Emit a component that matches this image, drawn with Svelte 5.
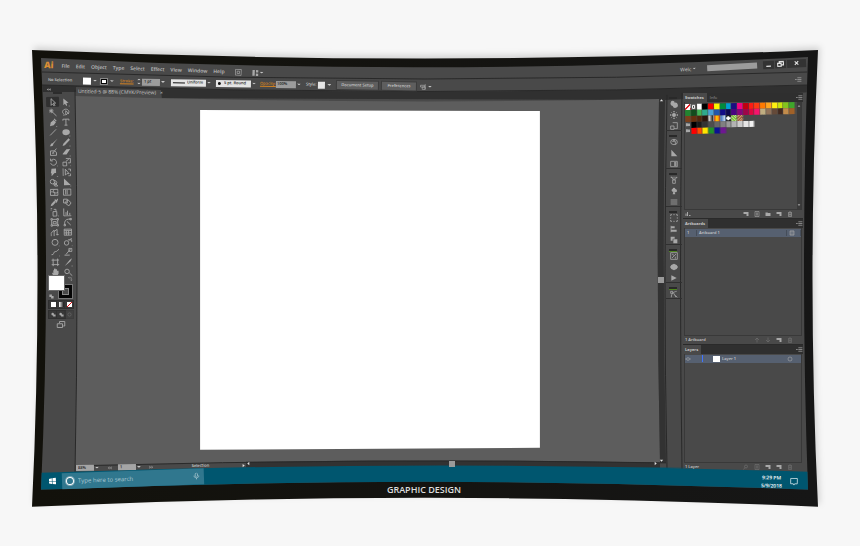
<script lang="ts">
  type Icon = { name: string; d: string; solid?: boolean };

  const menus = ['File', 'Edit', 'Object', 'Type', 'Select', 'Effect', 'View', 'Window', 'Help'];

  // all icons are drawn in a 12 x 12 box
  const tools: Icon[] = [
    { name: 'Selection', d: 'M4 1v9l2-2 2 3 1-1-2-3h3z' },
    { name: 'Direct selection', d: 'M3 1v9l2-2 2 3 1-1-1-3h3zM10 11h2v1h-2z', solid: true },
    { name: 'Magic wand', d: 'M5 5l6 6M4 1v6M1 4h6M2 2l4 4M6 2L2 6' },
    { name: 'Lasso', d: 'M3 8C0 5 3 2 6 2s6 3 3 6M6 4v6l2-2h2zM3 8c1 1 1 2 0 3' },
    { name: 'Pen', d: 'M2 11l1-5 4-3 3 3-3 4zM7 2l1-1 3 3-1 1zM10 11h2v1h-2z', solid: true },
    { name: 'Type', d: 'M2 4V2h8v2M6 2v8M4 10h4' },
    { name: 'Line segment', d: 'M2 10L10 2' },
    { name: 'Ellipse', d: 'M1 6a5 4 0 0 1 10 0a5 4 0 0 1-10 0zM10 11h2v1h-2z', solid: true },
    { name: 'Paintbrush', d: 'M12 1L6 8 5 7zM5 7c-3 0-2 3-4 4c3 0 5 0 5-3z', solid: true },
    { name: 'Pencil', d: 'M1 11l1-3 7-7 2 2-7 7zM10 11h2v1h-2z', solid: true },
    { name: 'Blob brush', d: 'M2 4h5l3 2v4H2zM5 7l5-6M4 7h3' },
    { name: 'Eraser', d: 'M1 8l5-6h5L6 9H1zM10 11h2v1h-2z', solid: true },
    { name: 'Rotate', d: 'M3 3a4 4 0 1 1-1 4M2 1v3h3M11 11h1' },
    { name: 'Scale', d: 'M1 6h5v5H1zM5 1h6v6H8M5 5l4-3M11 11h1' },
    { name: 'Width', d: 'M3 1h6v6H7l-4 4V7H2zM10 11h2v1h-2z', solid: true },
    { name: 'Free transform', d: 'M1 1v10M4 2v8l2-2h3zM8 2h3v3M11 8v3H8' },
    { name: 'Shape builder', d: 'M1 5a3 3 0 1 1 6 0a3 3 0 1 1-6 0M5 4a3 3 0 1 1 0 5M7 6v5h4z' },
    { name: 'Perspective grid', d: 'M2 1v9h9zM2 4h3M2 7h6M5 4v6M10 11h2v1h-2z', solid: true },
    { name: 'Mesh', d: 'M1 2h10v8H1zM1 6c3-3 6 3 10 0M6 2c-3 3 3 5 0 8' },
    { name: 'Gradient', d: 'M1 2h10v8H1zM6 3v6M4 3v6' },
    { name: 'Eyedropper', d: 'M1 11l1-3 4-4 2 2-4 4zM6 3l1-1 2 1 1-2 1 1-1 3-1 2z', solid: true },
    { name: 'Blend', d: 'M1 2h5v5H1zM4 5l3-2 4 4-3 4-4-3z' },
    { name: 'Symbol sprayer', d: 'M4 5h5v6H4zM5 2h3v3M1 1h2M1 3h1M11 11h1' },
    { name: 'Column graph', d: 'M1 1v10h10M4 10V6M6 10V4M9 10V7' },
    { name: 'Pattern', d: 'M1 1h2v2H1zM9 1h2v2H9zM1 9h2v2H1zM9 9h2v2H9zM3 2h6M3 10h6M2 3v6M10 3v6M4 5h4v3H4z' },
    { name: 'Reshape', d: 'M2 10V6c1-4 4-4 8-4M1 9h2v2H1zM9 1h2v2H9zM5 5l5 5' },
    { name: 'Graph curve', d: 'M1 11V7l4-4v8M5 5l4-3v8M8 9h3' },
    { name: 'Table', d: 'M1 2h10v8H1zM1 4h10M4 4v6M7 4v6M1 7h10' },
    { name: 'Warp', d: 'M2 6a4 4 0 1 1 8 0a4 4 0 1 1-8 0M11 11h1' },
    { name: 'Twirl', d: 'M1 7a3 3 0 1 1 6 0a3 3 0 1 1-6 0M6 3h5v3M8 3l3-2M11 11h1' },
    { name: 'Wrinkle', d: 'M1 9c4 1 2-4 5-4s2-1 5-3M11 11h1' },
    { name: 'Crystallize', d: 'M1 10h7M3 9l6-7M7 1h4v4H7z' },
    { name: 'Artboard', d: 'M3 1v10M9 1v10M1 3h10M1 9h10' },
    { name: 'Slice', d: 'M1 11L8 3l3-2-2 4-4 3zM10 11h2v1h-2z', solid: true },
    { name: 'Hand', d: 'M3 11L1 6l2 1V3h1V1h2v1h2v2h2v4l-2 3z', solid: true },
    { name: 'Zoom', d: 'M1 5a3 3 0 1 1 6 0a3 3 0 1 1-6 0M7 7l4 4' }
  ];

  const dock: { green?: boolean; icons: Icon[] }[] = [
    {
      icons: [
        { name: 'Color', d: 'M1 4a3 3 0 1 1 6 0a4 4 0 1 1-3 5a4 4 0 0 1-3-5z', solid: true },
        { name: 'Brightness', d: 'M3 6a3 3 0 1 1 6 0a3 3 0 1 1-6 0M5 0h2v2H5zM5 10h2v2H5zM0 5h2v2H0zM10 5h2v2h-2zM2 2h1v1H2zM9 2h1v1H9zM2 9h1v1H2zM9 9h1v1H9z', solid: true },
        { name: 'Links', d: 'M4 1h7v9H6M1 6h5v5H1z' }
      ]
    },
    {
      icons: [
        { name: 'Color guide', d: 'M1 6a5 4 0 1 1 10 0a5 4 0 1 1-10 0M4 6a2 2 0 1 1 4 0v4M6 2v4' },
        { name: 'Harmony', d: 'M2 1v10h9zM4 1l5 6', solid: true },
        { name: 'Gradient', d: 'M1 2h10v8H1zM8 3v6M9 3v6M7 3v6' }
      ]
    },
    {
      icons: [
        { name: 'Brushes', d: 'M4 6h4v5H4zM5 6L2 1M6 6V1M7 6l3-4M1 2h3M8 2h3' },
        { name: 'Symbols', d: 'M4 3a2 2 0 1 1 4 0a2 2 0 1 1 0 5l-1-1 1 4H4l1-4a2 2 0 1 1-1-4z', solid: true },
        { name: 'Stroke', d: 'M1 3h10M1 6h10M1 9h10' }
      ]
    },
    {
      icons: [
        { name: 'Transform', d: 'M1 1h2M5 1h2M9 1h2v2M11 5v2M11 9v2H9M7 11H5M3 11H1V9M1 7V5M1 3V1' },
        { name: 'Align', d: 'M1 1h1v10H1zM2 2h5v3H2zM2 7h8v3H2z', solid: true },
        { name: 'Pathfinder', d: 'M1 1h6v3H4v3H1zM5 5h6v6H5z', solid: true }
      ]
    },
    {
      green: true,
      icons: [
        { name: 'Appearance', d: 'M1 1h10v10H1zM3 9l6-6M3 3l3 2M8 7v3' },
        { name: 'Graphic styles', d: 'M6 1l4 2 2 3-2 3-4 2-4-2-2-3 2-3z', solid: true },
        { name: 'Actions', d: 'M2 2l8 4-8 4z', solid: true }
      ]
    },
    {
      green: true,
      icons: [{ name: 'Curves', d: 'M2 11c0-6 3-8 8-9M1 2h3v3H1zM8 8l3 3M5 4l4 7' }]
    }
  ];

  const swatches = [
    ['none', 'reg', '#fff', '#000', '#f50000', '#fff500', '#008c3c', '#00a0d2', '#1c0d82', '#f0047f', '#c00010', '#ff1c15', '#ff3a12', '#ff7a00', '#ffa51e', '#fff010', '#cbe50c', '#84c41d', '#3fa62b'],
    ['#238330', '#124c1d', '#42b455', '#2fa98c', '#4b9fd4', '#2456ac', '#110b86', '#0d0750', '#490281', '#85057a', '#9f0549', '#e0053f', '#f5146c', '#c0ad81', '#917259', '#654a39', '#43291e', '#c38c4b', '#a16128'],
    ['#7b401c', '#66300d', '#50260c', '#2b140c', 'fade', 'sunset', 'sky', 'dot', 'leaf', 'weave'],
    ['folder', '#000', '#1a1a1a', '#333', '#4d4d4d', '#666', '#808080', '#999', '#b3b3b3', '#ccc', '#e6e6e6', '#f2f2f2'],
    ['folder', '#ff0000', '#ff4b00', '#ffe600', '#20922b', '#0c1194', '#6e1791']
  ];

  const footIcons = {
    link: 'M1 10V5h2v5zM4 10V2h2v8zM8 8h3v2H8z',
    list: 'M2 1h8v10H2zM4 4h4M4 6h4M4 8h4',
    folder: 'M1 3h4l1 1h5v6H1z',
    page: 'M1 2h10v8H7V6H1z',
    trash: 'M2 3h8M5 1h2M3 4v7h6V4M5 5v4M7 5v4',
    up: 'M6 11V2M2 6l4-4 4 4',
    down: 'M6 1v9M2 6l4 4 4-4',
    search: 'M3 5a3 3 0 1 1 6 0a3 3 0 1 1-6 0M4 7l-3 4'
  };

  const isPlain = (c: string) => c.startsWith('#');

  let activeTool = 'Selection';
</script>

{#snippet glyph(d: string, solid: boolean | undefined)}
  <svg class="icon" class:solid viewBox="0 0 12 12" aria-hidden="true"><path {d} /></svg>
{/snippet}

{#snippet footButton(name: string, d: string, solid: boolean, dim: boolean)}
  <button class="foot-btn" class:dim aria-label={name}>{@render glyph(d, solid)}</button>
{/snippet}

<main>
  <div class="monitor">
    <svg class="shell" viewBox="32 50 786 457" preserveAspectRatio="none" aria-hidden="true">
      <defs>
        <linearGradient id="bezel"><stop stop-color="#12110b" /><stop offset="1" stop-color="#161616" /></linearGradient>
        <clipPath id="glass">
          <path d="M41 58Q425 77 808 57Q800 270 808 490Q425 474 41 490Q51 270 41 58z" />
        </clipPath>
      </defs>
      <path class="bezel" fill="url(#bezel)" d="M32 50Q425 67 818 50Q807 278 818 507Q425 489 32 507Q43 278 32 50z" />
      <g clip-path="url(#glass)">
        <path fill="#494949" d="M32 50H818V507H32z" />
        <path fill="#303030" d="M40 85Q425 98 810 85V92Q740 97 664 100L76 98V92H40z" />
        <path fill="#494949" d="M76 87L161 90L162 100H76z" />
        <path fill="#5d5d5d" d="M75 96Q370 105 659 99Q656 280 660 463Q370 458 75 466Q79 280 75 96z" />
        <path fill="#323232" d="M659 99H665Q662 280 666 463H660Q656 280 659 99z" />
        <path fill="#323232" d="M246 462Q480 459 660 463V470H246z" />
        <path class="edge" d="M42 72Q425 86 808 72" />
        <path class="edge" d="M42 85Q425 98 808 85" />
        <path class="edge" d="M75 90Q79 280 75 474" />
        <path class="edge" d="M667 95Q663 280 667 470" />
        <path class="edge" d="M682 93Q679 280 682 470" />
        <path class="edge" d="M75 466Q370 458 666 463" />
        <path fill="#00566f" d="M40 473Q425 459 810 472V492H40z" />
      </g>
    </svg>

    <header class="menubar">
      <nav class="menus" aria-label="Application menu">
        <b class="logo">Ai</b>
        {#each menus as item}
          <button class="menu">{item}</button>
        {/each}
        <button class="menu bridge" aria-label="Bridge">{@render glyph('M1 1h10v10H1zM4 4h4v4H4z', false)}</button>
        <button class="menu" aria-label="Arrange documents">
          {@render glyph('M1 1h4v10H1zM7 1h4v4H7zM7 7h4v4H7z', true)}<i class="caret"></i>
        </button>
      </nav>
      <div class="window-side">
        <button class="menu workspace-name">Welc <i class="caret"></i></button>
        <input class="help-search" type="search" aria-label="Search help" />
        <div class="window-buttons">
          <button aria-label="Minimize">{@render glyph('M2 8h8v2H2z', true)}</button>
          <button aria-label="Restore">{@render glyph('M1 5h6v5H1zM4 4V2h7v6H8', false)}</button>
          <button class="close" aria-label="Close">{@render glyph('M3 3l6 6M9 3l-6 6', false)}</button>
        </div>
      </div>
    </header>

    <section class="controlbar" aria-label="Control">
      <div class="controls">
        <span>No Selection</span>
        <button class="paint" aria-label="Fill"><span class="chip"></span><i class="caret"></i></button>
        <button class="paint" aria-label="Stroke color"><span class="chip ring"></span><i class="caret"></i></button>
        <div class="field">
          <label for="stroke">Stroke:</label>
          <span class="stepper"><i class="caret flip"></i><i class="caret"></i></span>
          <select id="stroke" class="grey narrow"><option>1 pt</option></select><i class="caret"></i>
        </div>
        <div class="field">
          <div class="brush line"><select aria-label="Profile"><option>Uniform</option></select></div><i class="caret"></i>
        </div>
        <div class="field">
          <div class="brush tip"><select aria-label="Brush"><option>5 pt. Round</option></select></div><i class="caret"></i>
        </div>
        <div class="field">
          <label for="opacity">Opacity:</label>
          <select id="opacity" class="grey"><option>100%</option></select><i class="caret"></i>
        </div>
        <button class="paint">Style: <span class="chip small"></span><i class="caret"></i></button>
        <button class="push">Document Setup</button>
        <button class="push">Preferences</button>
        <button class="paint" aria-label="Select similar">{@render glyph('M1 3h7v3H1zM4 6h5v4H4zM9 1v9', false)}<i class="caret"></i></button>
      </div>
      <button class="panel-menu" aria-label="Control options">{@render glyph('M0 6h3M4 3h7M4 6h7M4 9h7', false)}</button>
    </section>

    <div class="workspace">
      <aside class="toolbar" aria-label="Tools">
        <button class="collapse" aria-label="Collapse tools">{@render glyph('M6 3L2 6l4 3zM11 3L7 6l4 3z', true)}</button>
        <div class="grip"></div>
        <div class="tools">
          {#each tools as tool}
            <button
              class="tool"
              class:active={tool.name === activeTool}
              aria-label={tool.name}
              on:click={() => (activeTool = tool.name)}
            >
              {@render glyph(tool.d, tool.solid)}
            </button>
          {/each}
        </div>
        <div class="fill-stroke">
          <button class="stroke-box" aria-label="Stroke"></button>
          <button class="fill-box" aria-label="Fill"></button>
          <span class="swap">{@render glyph('M1 4h7v7M3 2L1 4l2 2M6 9l2 2 2-2', false)}</span>
          <span class="default">{@render glyph('M1 1h6v6H1zM5 5h6v6H5z', true)}</span>
        </div>
        <div class="modes">
          <button aria-label="Color"><span class="mode white"></span></button>
          <button aria-label="Gradient"><span class="mode fade"></span></button>
          <button aria-label="None"><span class="mode none"></span></button>
        </div>
        <div class="modes">
          <button aria-label="Draw normal">{@render glyph('M1 5a3 3 0 1 1 6 0v1h4v5H5V8a3 3 0 0 1-4-3z', true)}</button>
          <button aria-label="Draw behind">{@render glyph('M1 5a3 3 0 1 1 6 0v1h4v5H5V8a3 3 0 0 1-4-3z', true)}</button>
          <button class="dim" aria-label="Draw inside">{@render glyph('M2 6a4 4 0 1 1 8 0a4 4 0 1 1-8 0', false)}</button>
        </div>
        <button class="screen-mode" aria-label="Screen mode">{@render glyph('M1 5h7v5H1zM4 4V2h7v6H9', false)}</button>
      </aside>

      <section class="document">
        <div class="tab">Untitled-5 @ 88% (CMYK/Preview) <button aria-label="Close document">×</button></div>
        <div class="canvas"><div class="artboard"></div></div>
        <footer class="status">
          <div class="status-left">
            <input class="zoom" aria-label="Zoom" value="88%" /><i class="caret"></i>
            <button class="dim" aria-label="First and previous artboard">{@render glyph('M1 2v8M6 2L2 6l4 4zM11 2L7 6l4 4z', true)}</button>
            <input class="page" aria-label="Artboard" value="1" /><i class="caret"></i>
            <button class="dim" aria-label="Next and last artboard">{@render glyph('M1 2l4 4-4 4zM6 2l4 4-4 4zM11 2v8', true)}</button>
            <span class="selection">Selection</span>
            <button aria-label="Status menu">{@render glyph('M4 2l5 4-5 4z', true)}</button>
          </div>
          <div class="hscroll">
            {@render glyph('M8 2L3 6l5 4z', true)}
            <span class="thumb"></span>
            {@render glyph('M4 2l5 4-5 4z', true)}
          </div>
        </footer>
      </section>

      <div class="vscroll">
        {@render glyph('M2 8l4-5 4 5z', true)}
        <span class="thumb"></span>
        {@render glyph('M2 4l4 5 4-5z', true)}
      </div>

      <aside class="dock" aria-label="Collapsed panels">
        {#each dock as group}
          <div class="dock-group" class:green={group.green}>
            {#each group.icons as icon}
              <button aria-label={icon.name}>{@render glyph(icon.d, icon.solid)}</button>
            {/each}
          </div>
        {/each}
      </aside>

      <aside class="panels">
        <section class="panel">
          <header>
            <h2>Swatches</h2>
            <span class="other">Info</span>
            <button class="panel-menu" aria-label="Swatches options">{@render glyph('M0 6h3M4 3h7M4 6h7M4 9h7', false)}</button>
          </header>
          <div class="panel-body with-scroll">
            <div class="swatches">
              {#each swatches as row}
                <div class="swatch-row">
                  {#each row as color}
                    {#if isPlain(color)}
                      <span class="swatch" style={`background:${color}`}></span>
                    {:else if color === 'folder'}
                      <span class="swatch">{@render glyph(footIcons.folder, true)}</span>
                    {:else}
                      <span class={`swatch ${color}`}></span>
                    {/if}
                  {/each}
                </div>
              {/each}
            </div>
            <div class="mini-scroll">
              {@render glyph('M2 8l4-5 4 5z', true)}
              {@render glyph('M2 4l4 5 4-5z', true)}
            </div>
          </div>
          <footer>
            {@render footButton('Libraries', footIcons.link, true, false)}
            <span class="push-right"></span>
            {@render footButton('Show kinds', footIcons.page, true, false)}
            {@render footButton('Options', footIcons.list, false, false)}
            {@render footButton('New group', footIcons.folder, true, false)}
            {@render footButton('New swatch', footIcons.page, true, false)}
            {@render footButton('Delete swatch', footIcons.trash, false, false)}
          </footer>
        </section>

        <section class="panel">
          <header>
            <h2>Artboards</h2>
            <button class="panel-menu" aria-label="Artboards options">{@render glyph('M0 6h3M4 3h7M4 6h7M4 9h7', false)}</button>
          </header>
          <div class="panel-body">
            <div class="item artboard-item">
              <span>1</span><span>Artboard 1</span>
              <span>{@render glyph('M2 2h8v8H2zM4 1v10M8 1v10', false)}</span>
            </div>
          </div>
          <footer>
            <span>1 Artboard</span>
            <span class="push-right"></span>
            {@render footButton('Move up', footIcons.up, false, true)}
            {@render footButton('Move down', footIcons.down, false, true)}
            {@render footButton('New artboard', footIcons.page, true, false)}
            {@render footButton('Delete artboard', footIcons.trash, false, true)}
          </footer>
        </section>

        <section class="panel">
          <header>
            <h2>Layers</h2>
            <button class="panel-menu" aria-label="Layers options">{@render glyph('M0 6h3M4 3h7M4 6h7M4 9h7', false)}</button>
          </header>
          <div class="panel-body">
            <div class="item layer-item">
              <span>{@render glyph('M1 6q5-6 10 0q-5 6-10 0M5 6h2', false)}</span>
              <span class="layer-color"></span>
              <span class="thumbnail"></span>
              <span>Layer 1</span>
              <span>{@render glyph('M2 6a4 4 0 1 1 8 0a4 4 0 1 1-8 0', false)}</span>
            </div>
          </div>
          <footer>
            <span>1 Layer</span>
            <span class="push-right"></span>
            {@render footButton('Locate', footIcons.search, false, true)}
            {@render footButton('Mask', footIcons.list, false, true)}
            {@render footButton('New sublayer', footIcons.page, true, false)}
            {@render footButton('New layer', footIcons.page, true, false)}
            {@render footButton('Delete layer', footIcons.trash, false, true)}
          </footer>
        </section>
      </aside>
    </div>

    <footer class="taskbar">
      <div class="task-left">
        <button class="start" aria-label="Start">
          <svg viewBox="0 0 12 12"><path d="M0 2l5-1v5H0zM6 1l6-1v6H6zM0 7h5v4l-5-1zM6 7h6v5l-6-1z" /></svg>
        </button>
        <div class="search">
          <span class="cortana"></span>
          <input type="text" placeholder="Type here to search" aria-label="Type here to search" />
          {@render glyph('M4 2q2-3 4 0v4q-2 3-4 0zM2 5v2q4 5 8 0V5M6 9v3', false)}
        </div>
      </div>
      <div class="task-right">
        <time>9:29 PM<br />5/9/2018</time>
        <button aria-label="Notifications">{@render glyph('M1 1h10v8H7l-1 2-1-2H1z', false)}</button>
      </div>
    </footer>
    <p class="brand">GRAPHIC DESIGN</p>
  </div>
</main>

<style>
  :global(body) {
    margin: 0;
    background: #f7f7f7;
  }

  main {
    padding: 50px 42px 39px 32px;
    font: 4px/6px 'Open Sans', 'Noto Sans', sans-serif;
    color: #cacaca;
  }

  .monitor {
    position: relative;
    padding: 8px 12px 12px 10px;
  }

  .shell {
    position: absolute;
    inset: 0;
    width: 100%;
    height: 100%;
    overflow: visible;
  }

  .bezel {
    filter: drop-shadow(2px -3px 3px #00000026);
  }

  .edge {
    fill: none;
    stroke: #292929;
  }

  .menubar,
  .controlbar,
  .workspace,
  .taskbar,
  .brand {
    position: relative;
  }

  button,
  input,
  select {
    appearance: none;
    margin: 0;
    padding: 0;
    border: 0;
    border-radius: 0;
    background: none;
    color: inherit;
    font: inherit;
  }

  button {
    display: flex;
    align-items: center;
    justify-content: center;
  }

  .icon {
    display: block;
    flex: none;
    width: 7px;
    height: 7px;
    fill: none;
    stroke: #a8a8a8;
    stroke-width: 1.2;
  }

  .icon.solid {
    fill: #a8a8a8;
    stroke: none;
  }

  .caret {
    flex: none;
    width: 4px;
    height: 2px;
    margin: 0 1px;
    background: #c4c4c4;
    clip-path: polygon(0 0, 100% 0, 50% 100%);
  }

  .caret.flip {
    clip-path: polygon(50% 0, 100% 100%, 0 100%);
  }

  /* menu bar */
  .menubar {
    display: flex;
    justify-content: space-between;
    height: 14px;
  }

  .menus {
    display: flex;
    align-items: center;
    gap: 6px;
    padding-left: 2px;
    color: #c0c0c0;
    font-size: 5px;
    font-weight: 600;
    transform: rotate(2deg);
    transform-origin: left center;
  }

  .logo {
    margin-right: 2px;
    color: #d98e35;
    font-size: 9px;
    line-height: 12px;
  }

  .bridge {
    margin: 0 4px;
  }

  .window-side {
    display: flex;
    align-items: center;
    height: 9px;
    transform: rotate(-3deg);
    transform-origin: right center;
  }

  .workspace-name {
    margin-right: 10px;
    font-size: 5px;
  }

  .help-search {
    width: 50px;
    height: 6px;
    margin-right: 6px;
    background: #9c9c9c;
  }

  .window-buttons {
    display: flex;
    gap: 1px;
  }

  .window-buttons button {
    width: 11px;
    height: 8px;
    background: #333;
  }

  .window-buttons .close {
    width: 19px;
  }

  .window-buttons .icon {
    stroke: #e2e2e2;
    stroke-width: 2;
  }

  .window-buttons .icon.solid {
    fill: #e2e2e2;
    stroke: none;
  }

  /* control bar */
  .controlbar {
    display: flex;
    align-items: center;
    justify-content: space-between;
    height: 14px;
    padding: 0 4px 0 6px;
    font-weight: 600;
  }

  .controls {
    display: grid;
    grid-template-columns: 35px 17px 20px 51px 45px 44px 46px 31px 45px 38px auto;
    align-items: center;
    padding-top: 1px;
    transform: rotate(1deg);
    transform-origin: left center;
    white-space: nowrap;
  }

  .paint,
  .field {
    display: flex;
    align-items: center;
    justify-content: flex-start;
  }

  .chip {
    width: 8px;
    height: 7px;
    margin-right: 1px;
    background: #fff;
  }

  .chip.ring {
    box-sizing: border-box;
    border: 2px solid #050505;
    outline: 1px solid #888;
    outline-offset: -1px;
  }

  .chip.small {
    width: 7px;
    margin-left: 2px;
    background: #e6e6e6;
  }

  .field label {
    width: 16px;
    color: #d48220;
    text-decoration: underline;
  }

  .stepper {
    display: grid;
    gap: 2px;
  }

  .grey {
    width: 20px;
    height: 7px;
    padding-left: 1px;
    background: #9c9c9c;
    color: #1c1c1c;
  }

  .grey.narrow {
    width: 18px;
    padding-left: 2px;
  }

  .brush {
    display: flex;
    align-items: center;
    gap: 2px;
    width: 31px;
    height: 7px;
    padding: 0 2px;
    background: #e4e4e4;
    color: #222;
  }

  .brush select {
    flex: none;
  }

  .brush.line::before {
    content: '';
    flex: 1;
    height: 1px;
    background: #111;
  }

  .brush.tip::before {
    content: '';
    width: 3px;
    height: 3px;
    margin-right: 1px;
    border-radius: 50%;
    background: #111;
  }

  .push {
    height: 8px;
    margin-right: 4px;
    background: #5e5e5e;
    box-shadow: 0 0 0 1px #3c3c3c;
  }

  .panel-menu {
    width: 8px;
  }

  /* workspace */
  .workspace {
    display: grid;
    grid-template-columns: 34px minmax(0, 1fr) 8px 16px 124px;
  }

  .toolbar {
    padding: 0 0 0 4px;
  }

  .collapse {
    height: 6px;
  }

  .collapse .icon {
    width: 5px;
  }

  .grip {
    width: 9px;
    height: 2px;
    margin: 0 0 3px 7px;
    background: #2c2c2c;
  }

  .tools {
    display: grid;
    grid-template-columns: 13px 13px;
    grid-auto-rows: 10px;
    transform: rotate(-1deg);
    transform-origin: left top;
  }

  .tool {
    border-radius: 1px;
  }

  .tool .icon {
    width: 9px;
    height: 9px;
  }

  .tool.active {
    background: #303030;
  }

  .fill-stroke {
    position: relative;
    width: 24px;
    height: 23px;
    margin: -1px 0 0 3px;
  }

  .fill-box,
  .stroke-box,
  .swap,
  .default {
    position: absolute;
  }

  .fill-box {
    left: 0;
    top: 0;
    width: 15px;
    height: 14px;
    background: #fff;
    box-shadow: 0 0 0 1px #6a6a6a;
  }

  .stroke-box {
    right: 1px;
    bottom: 1px;
    width: 13px;
    height: 13px;
    border: 3px solid #050505;
    outline: 1px solid #777;
    background: #494949;
    box-shadow: inset 0 0 0 1px #888;
  }

  .swap {
    right: 0;
    top: 0;
  }

  .default {
    left: 0;
    bottom: 0;
  }

  .swap .icon,
  .default .icon {
    width: 5px;
    height: 5px;
  }

  .modes {
    display: flex;
    margin: 2px 0 2px 3px;
  }

  .modes button {
    width: 8px;
    height: 7px;
    background: #383838;
    box-shadow: 0 0 0 1px #303030;
  }

  .modes .icon {
    width: 5px;
    height: 5px;
  }

  .mode {
    width: 5px;
    height: 5px;
  }

  .white {
    background: #fff;
  }

  .fade {
    background: linear-gradient(90deg, #fff, #111);
  }

  .none {
    background: linear-gradient(135deg, #fff 42%, #e00c12 42% 58%, #fff 58%);
  }

  .modes + .modes {
    margin-top: 3px;
  }

  .screen-mode {
    margin: 2px 0 0 10px;
  }

  .screen-mode .icon {
    width: 10px;
    height: 9px;
  }

  .dim {
    opacity: 0.45;
  }

  .document {
    display: flex;
    flex-direction: column;
  }

  .tab {
    display: flex;
    align-items: center;
    gap: 4px;
    height: 10px;
    padding-left: 2px;
    font-size: 5px;
    transform: rotate(1deg);
    transform-origin: left center;
  }

  .canvas {
    display: flex;
    flex: 1;
    justify-content: center;
    align-items: flex-start;
    padding: 14px 0 11px 6px;
  }

  .artboard {
    width: 59%;
    aspect-ratio: 1;
    background: #fff;
    clip-path: polygon(0 0, 100% 1px, 100% calc(100% - 2px), 0 100%);
  }

  .status {
    display: flex;
    align-items: center;
    height: 12px;
  }

  .status-left {
    display: flex;
    align-items: center;
    flex: none;
    width: 170px;
    margin-top: 3px;
    font-weight: 600;
    transform: rotate(-1deg);
    transform-origin: left center;
  }

  .status input {
    box-sizing: border-box;
    width: 18px;
    height: 6px;
    padding-left: 2px;
    background: #a5a5a5;
    color: #1c1c1c;
  }

  .status .dim {
    width: 18px;
  }

  .selection {
    flex: 1;
    text-align: center;
  }

  .hscroll {
    display: flex;
    flex: 1;
    align-items: center;
    justify-content: space-between;
    margin-bottom: 6px;
  }

  .vscroll {
    display: flex;
    flex-direction: column;
    align-items: center;
    justify-content: space-between;
    padding: 12px 2px 10px 0;
  }

  .hscroll .icon,
  .vscroll .icon,
  .status-left .icon {
    width: 5px;
    height: 5px;
    fill: #e0e0e0;
  }

  .thumb {
    width: 6px;
    height: 6px;
    background: #9a9a9a;
  }

  .dock {
    padding-top: 9px;
  }

  .dock-group {
    display: grid;
    grid-auto-rows: 11px;
    padding-top: 2px;
    border-bottom: 1px solid #303030;
    margin-bottom: 2px;
  }

  .dock-group::before {
    content: '';
    position: absolute;
    width: 8px;
    height: 2px;
    margin-left: 3px;
    background: #292929;
  }

  .dock-group.green::before {
    border-bottom: 1px solid #4f8420;
  }

  .dock-group button {
    padding-top: 2px;
  }

  .dock .icon {
    width: 8px;
    height: 8px;
  }

  /* panels */
  .panels {
    display: flex;
    flex-direction: column;
    padding: 7px 3px 2px 1px;
  }

  .panel {
    display: flex;
    flex: 1;
    flex-direction: column;
  }

  .panel header {
    display: flex;
    align-items: center;
    height: 9px;
    background: #2f2f2f;
  }

  .panel h2 {
    height: 9px;
    margin: 0;
    padding: 0 3px 0 2px;
    background: #494949;
    font-size: 4px;
    line-height: 9px;
  }

  .other {
    padding-left: 3px;
    color: #989898;
  }

  .panel header .panel-menu {
    margin-left: auto;
  }

  .panel-body {
    flex: 1;
    margin: 0 1px;
    border: 1px solid #393939;
    border-top: 0;
  }

  .with-scroll {
    display: flex;
    justify-content: space-between;
  }

  .swatches {
    width: 110px;
    padding-top: 2px;
    transform: rotate(-1deg);
    transform-origin: left top;
  }

  .swatch-row {
    display: grid;
    grid-template-columns: repeat(19, 1fr);
    height: 6px;
  }

  .swatch {
    height: 6px;
    border-right: 1px solid #49494980;
    overflow: hidden;
  }

  .swatch .icon {
    width: 5px;
    height: 5px;
  }

  .reg {
    background: radial-gradient(circle, #333 20%, #fff 25% 45%, #555 50%);
  }

  .sunset {
    background: linear-gradient(90deg, #e8321d, #ffd500, #f26a12);
  }

  .sky {
    background: linear-gradient(90deg, #2d64b8, #d8e6f6);
  }

  .dot {
    background: radial-gradient(circle, #fff 45%, #111 50%);
  }

  .leaf {
    background: repeating-linear-gradient(45deg, #72b82c 0 1px, #d9efb4 1px 2px);
  }

  .weave {
    background: repeating-linear-gradient(135deg, #9b5a3b 0 1px, #d8b08c 1px 2px);
  }

  .mini-scroll {
    display: flex;
    flex-direction: column;
    justify-content: space-between;
    padding: 2px 0;
    background: #3a3a3a;
  }

  .mini-scroll .icon {
    width: 4px;
    height: 4px;
  }

  .panel footer {
    display: flex;
    align-items: center;
    gap: 5px;
    height: 8px;
    padding: 0 10px 0 2px;
    font-weight: 600;
    border-bottom: 1px solid #2a2a2a;
  }

  .panel:last-child footer {
    border-bottom: 0;
  }

  .push-right {
    flex: 1;
  }

  .foot-btn .icon {
    width: 6px;
    height: 6px;
  }

  .item {
    display: grid;
    align-items: center;
    height: 8px;
    margin-top: 1px;
    background: #566070;
    font-weight: 600;
  }

  .item .icon {
    width: 6px;
    height: 6px;
  }

  .artboard-item {
    grid-template-columns: 12px 1fr 14px;
  }

  .artboard-item span {
    padding-left: 2px;
    border-right: 1px solid #454d59;
  }

  .layer-item {
    grid-template-columns: 17px 11px 9px 1fr 14px;
  }

  .layer-color {
    width: 1px;
    height: 7px;
    background: #3f74ff;
  }

  .thumbnail {
    width: 7px;
    height: 6px;
    background: #fff;
  }

  /* taskbar */
  .taskbar {
    display: flex;
    justify-content: space-between;
    height: 17px;
    font-size: 6px;
    line-height: 8px;
  }

  .task-left {
    display: flex;
    align-items: center;
    transform: rotate(-2deg);
    transform-origin: left center;
  }

  .start {
    width: 20px;
  }

  .start svg {
    width: 7px;
    height: 7px;
    fill: #fff;
  }

  .search {
    display: flex;
    align-items: center;
    gap: 4px;
    box-sizing: border-box;
    width: 142px;
    height: 16px;
    padding: 0 4px;
    background: #30778e;
  }

  .search input {
    flex: 1;
    min-width: 0;
  }

  .search input::placeholder {
    color: #a9c6d0;
    opacity: 1;
  }

  .cortana {
    width: 6px;
    height: 6px;
    border: 1px solid #fff;
    border-radius: 50%;
    outline: 1px solid #ffffff60;
  }

  .search .icon {
    stroke: #a9c6d0;
  }

  .task-right {
    display: flex;
    align-items: center;
    gap: 8px;
    padding-right: 8px;
    color: #fff;
    font-size: 5px;
    font-weight: 600;
    text-align: center;
    transform: rotate(1deg);
    transform-origin: right center;
  }

  .task-right .icon {
    width: 8px;
    height: 8px;
    stroke: #d6e6eb;
  }

  .brand {
    margin: -5px 0 0;
    color: #dedede;
    font-size: 9px;
    font-weight: 600;
    line-height: 10px;
    text-align: center;
  }
</style>
